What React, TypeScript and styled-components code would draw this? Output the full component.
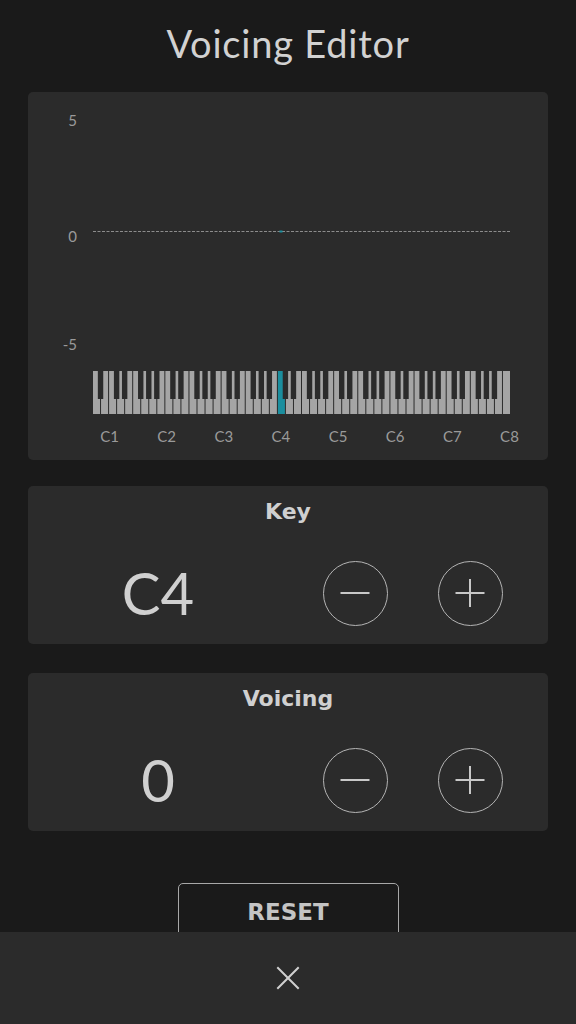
import styled, { createGlobalStyle } from "styled-components";

const GlobalStyle = createGlobalStyle`
  html, body {
    margin: 0;
    padding: 0;
    background: #1a1a1a;
  }
  body {
    font-family: "Lato", "Open Sans", "Liberation Sans", sans-serif;
    color: #cfcfcf;
  }
`;

const KEY_LEFT = 65;
const KEY_SPAN = 418;
const WHITE_COUNT = 52;
const WHITE_W = KEY_SPAN / WHITE_COUNT;
const NOTE_ORDER = ["A", "B", "C", "D", "E", "F", "G"];
const SELECTED = 23; // C4 counted from A0

function Piano() {
  const whites = [];
  const blacks = [];
  for (let i = 0; i < WHITE_COUNT; i++) {
    const x = KEY_LEFT + i * WHITE_W;
    whites.push(
      <rect
        key={"w" + i}
        x={x}
        y={279}
        width={WHITE_W - 1}
        height={43}
        fill={i === SELECTED ? "#1b8e9e" : "#a5a5a5"}
      />
    );
    const note = NOTE_ORDER[i % 7];
    if (i < WHITE_COUNT - 1 && note !== "B" && note !== "E") {
      blacks.push(
        <rect
          key={"b" + i}
          x={x + WHITE_W - 3.2}
          y={279}
          width={5.4}
          height={28}
          fill="#2b2b2b"
        />
      );
    }
  }
  return (
    <g>
      {whites}
      {blacks}
    </g>
  );
}

function Chart() {
  const labels = ["C1", "C2", "C3", "C4", "C5", "C6", "C7", "C8"];
  return (
    <svg width="520" height="368" viewBox="0 0 520 368">
      <g fill="#9a9a9a" fontSize="15" fontFamily="Lato, 'Open Sans', sans-serif">
        <text x="49" y="34" textAnchor="end">5</text>
        <text x="49" y="150" textAnchor="end">0</text>
        <text x="49" y="258" textAnchor="end">-5</text>
      </g>
      <line
        x1={KEY_LEFT}
        x2={KEY_LEFT + KEY_SPAN}
        y1="139.5"
        y2="139.5"
        stroke="#8c8c8c"
        strokeWidth="1"
        strokeDasharray="3 1.5"
      />
      <rect x="251.5" y="138.5" width="3" height="2" fill="#1b8e9e" />
      <Piano />
      <g fill="#9a9a9a" fontSize="15" fontFamily="Lato, 'Open Sans', sans-serif">
        {labels.map((l, i) => (
          <text key={l} x={81.5 + i * 57.14} y="350" textAnchor="middle">
            {l}
          </text>
        ))}
      </g>
    </svg>
  );
}

function StepButton({ kind }: { kind: "minus" | "plus" }) {
  return (
    <RoundButton aria-label={kind}>
      <svg width="32" height="32" viewBox="-16 -16 32 32">
        <g stroke="#c8c8c8" strokeWidth="2">
          <line x1="-14.5" x2="14.5" y1="0" y2="0" />
          {kind === "plus" && <line x1="0" x2="0" y1="-14" y2="14" />}
        </g>
      </svg>
    </RoundButton>
  );
}

function Control({ title, value, gap }: { title: string; value: string; gap: number }) {
  return (
    <Card $gap={gap}>
      <CardTitle>{title}</CardTitle>
      <ValueRow>
        <Value>{value}</Value>
        <Buttons>
          <StepButton kind="minus" />
          <StepButton kind="plus" />
        </Buttons>
      </ValueRow>
    </Card>
  );
}

export default function App() {
  return (
    <>
      <GlobalStyle />
      <Page>
        <Title>Voicing Editor</Title>
        <ChartCard>
          <Chart />
        </ChartCard>
        <Control title="Key" value="C4" gap={26} />
        <Control title="Voicing" value="0" gap={29} />
        <ResetRow>
          <ResetButton>RESET</ResetButton>
        </ResetRow>
      </Page>
      <BottomBar>
        <svg width="24" height="24" viewBox="0 0 24 24">
          <g stroke="#d0d0d0" strokeWidth="2" strokeLinecap="square">
            <line x1="2" y1="2" x2="22" y2="22" />
            <line x1="22" y1="2" x2="2" y2="22" />
          </g>
        </svg>
      </BottomBar>
    </>
  );
}

const Page = styled.div`
  display: flex;
  flex-direction: column;
  padding: 0 28px 120px;
`;

const Title = styled.h1`
  margin: 0;
  height: 92px;
  display: flex;
  align-items: center;
  justify-content: center;
  font-size: 38px;
  font-weight: 400;
  letter-spacing: 0.8px;
  color: #d2d2d2;
  padding-bottom: 6px;
  box-sizing: border-box;
`;

const ChartCard = styled.div`
  height: 368px;
  background: #2b2b2b;
  border-radius: 5px;
  overflow: hidden;
  svg {
    display: block;
  }
`;

const Card = styled.div<{ $gap: number }>`
  margin-top: ${(p) => p.$gap}px;
  height: 158px;
  box-sizing: border-box;
  padding-top: 13px;
  background: #2b2b2b;
  border-radius: 5px;
  display: flex;
  flex-direction: column;
`;

const CardTitle = styled.div`
  height: 26px;
  line-height: 26px;
  text-align: center;
  font-family: "DejaVu Sans", "Liberation Sans", sans-serif;
  font-size: 22px;
  font-weight: 700;
  color: #d0d0d0;
`;

const ValueRow = styled.div`
  margin-top: 35px;
  display: grid;
  grid-template-columns: 1fr 1fr;
  align-items: center;
  height: 66px;
`;

const Value = styled.div`
  text-align: center;
  font-size: 58px;
  line-height: 66px;
  color: #d0d0d0;
`;

const Buttons = styled.div`
  display: flex;
  justify-content: center;
  gap: 50px;
  padding-right: 11px;
`;

const RoundButton = styled.button`
  width: 65px;
  height: 65px;
  border-radius: 50%;
  border: 1.5px solid #b4b4b4;
  background: transparent;
  padding: 0;
  display: flex;
  align-items: center;
  justify-content: center;
  cursor: pointer;
`;

const ResetRow = styled.div`
  margin-top: 52px;
  display: flex;
  justify-content: center;
`;

const ResetButton = styled.button`
  width: 221px;
  height: 58px;
  box-sizing: border-box;
  border: 1.5px solid #a8a8a8;
  border-radius: 5px;
  background: transparent;
  color: #c4c4c4;
  font-family: "DejaVu Sans", "Liberation Sans", sans-serif;
  font-size: 23px;
  font-weight: 700;
  padding: 0;
  display: flex;
  justify-content: center;
  align-items: flex-start;
  line-height: 57px;
  cursor: pointer;
`;

const BottomBar = styled.div`
  position: fixed;
  left: 0;
  right: 0;
  bottom: 0;
  height: 92px;
  background: #2b2b2b;
  display: flex;
  align-items: center;
  justify-content: center;
`;
